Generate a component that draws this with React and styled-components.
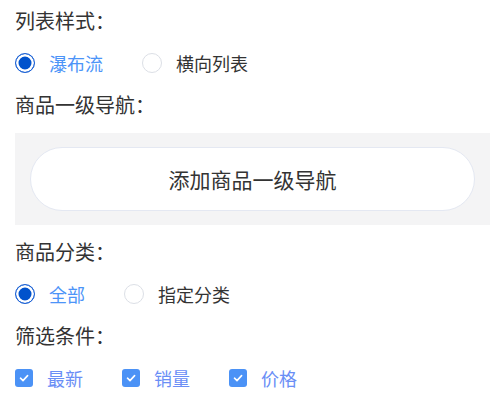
import React, { useState } from "react";
import styled, { createGlobalStyle } from "styled-components";

const GlobalStyle = createGlobalStyle`
  html, body {
    margin: 0;
    padding: 0;
    background: #fff;
  }
  body {
    font-family: "Noto Sans CJK SC", "Noto Sans", sans-serif;
    color: #333;
  }
`;

function App() {
  const [layout, setLayout] = useState("waterfall");
  const [scope, setScope] = useState("all");
  const [filters, setFilters] = useState({ newest: true, sales: true, price: true });

  const toggle = (key) => setFilters({ ...filters, [key]: !filters[key] });

  return (
    <Page>
      <GlobalStyle />
      <Label>列表样式：</Label>
      <OptionRow>
        <Radio
          checked={layout === "waterfall"}
          onClick={() => setLayout("waterfall")}
          text="瀑布流"
        />
        <Radio
          checked={layout === "horizontal"}
          onClick={() => setLayout("horizontal")}
          text="横向列表"
        />
      </OptionRow>

      <Label>商品一级导航：</Label>
      <NavPanel>
        <AddButton>添加商品一级导航</AddButton>
      </NavPanel>

      <Label $top={6}>商品分类：</Label>
      <OptionRow>
        <Radio checked={scope === "all"} onClick={() => setScope("all")} text="全部" />
        <Radio
          checked={scope === "custom"}
          onClick={() => setScope("custom")}
          text="指定分类"
        />
      </OptionRow>

      <Label>筛选条件：</Label>
      <OptionRow>
        <Checkbox checked={filters.newest} onClick={() => toggle("newest")} text="最新" />
        <Checkbox checked={filters.sales} onClick={() => toggle("sales")} text="销量" />
        <Checkbox checked={filters.price} onClick={() => toggle("price")} text="价格" />
      </OptionRow>
    </Page>
  );
}

function Radio({ checked, onClick, text }) {
  return (
    <Option onClick={onClick}>
      <RadioDot $checked={checked} />
      <OptionText $checked={checked}>{text}</OptionText>
    </Option>
  );
}

function Checkbox({ checked, onClick, text }) {
  return (
    <Option onClick={onClick}>
      <CheckBox $checked={checked}>
        {checked && (
          <svg width="12" height="12" viewBox="0 0 12 12" fill="none">
            <path
              d="M2.5 6.2 L5 8.6 L9.6 3.6"
              stroke="#fff"
              strokeWidth="1.6"
              strokeLinecap="round"
              strokeLinejoin="round"
            />
          </svg>
        )}
      </CheckBox>
      <CheckText>{text}</CheckText>
    </Option>
  );
}

export default App;

const Page = styled.div`
  width: 475px;
  padding: 0 9px 0 15px;
`;

const Label = styled.div`
  height: 42px;
  line-height: 42px;
  margin-top: ${(p) => p.$top || 0}px;
  font-size: 20px;
  color: #333;
`;

const OptionRow = styled.div`
  display: flex;
  align-items: center;
  gap: 39px;
  height: 42px;
`;

const Option = styled.label`
  display: flex;
  align-items: center;
  gap: 14px;
  cursor: pointer;
`;

const RadioDot = styled.span`
  box-sizing: border-box;
  width: 20px;
  height: 20px;
  border-radius: 50%;
  border: ${(p) => (p.$checked ? "1.5px solid #1e63d6" : "1px solid #dcdfe6")};
  background: ${(p) => (p.$checked ? "#0052cc" : "#fff")};
  box-shadow: ${(p) => (p.$checked ? "inset 0 0 0 2.5px #fff" : "none")};
`;

const OptionText = styled.span`
  font-size: 18px;
  color: ${(p) => (p.$checked ? "#4c94f8" : "#333")};
`;

const CheckBox = styled.span`
  display: flex;
  align-items: center;
  justify-content: center;
  width: 18px;
  height: 18px;
  border-radius: 3px;
  background: ${(p) => (p.$checked ? "#4b92f6" : "#fff")};
  border: ${(p) => (p.$checked ? "none" : "1px solid #dcdfe6")};
`;

const CheckText = styled.span`
  font-size: 18px;
  color: #6a8ef6;
`;

const NavPanel = styled.div`
  margin-top: 7px;
  padding: 14px 15px;
  background: #f4f4f5;
`;

const AddButton = styled.button`
  display: block;
  width: 100%;
  height: 64px;
  border-radius: 32px;
  border: 1px solid #e4e8f2;
  background: #fff;
  font-family: inherit;
  font-size: 21px;
  color: #333;
  cursor: pointer;
`;
